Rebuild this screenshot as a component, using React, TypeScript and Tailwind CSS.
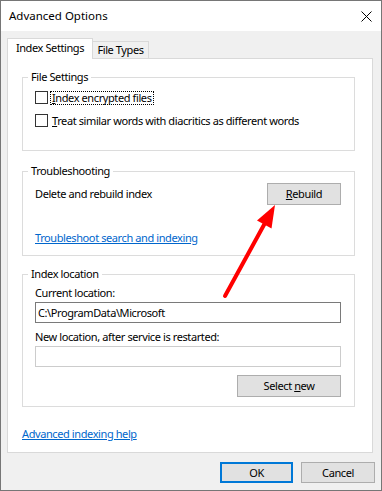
import React from "react";

function Checkbox({ children, focused }: { children: React.ReactNode; focused?: boolean }) {
	return (
		<div className="flex h-[15px] items-center">
			<span className="h-[13px] w-[13px] border border-[#333333] bg-white" />
			<span
				className={
					focused
						? "ml-[2px] flex h-[14px] items-center border border-dotted border-black px-[1px]"
						: "ml-[3px] flex h-[14px] items-center px-[1px]"
				}
			>
				{children}
			</span>
		</div>
	);
}

function Button({ children, primary, w = "w-[74px]" }: { children: React.ReactNode; primary?: boolean; w?: string }) {
	return (
		<button
			className={`${w} h-[21px] bg-[#e1e1e1] leading-[16px] ${
				primary ? "border-2 border-[#0078d7]" : "border border-[#adadad]"
			}`}
		>
			{children}
		</button>
	);
}

function Group({ label, h, children }: { label: string; h: string; children: React.ReactNode }) {
	return (
		<fieldset className={`w-[333px] ${h} border border-[#dcdcdc]`}>
			<legend className="ml-[5px] px-[3px] leading-[16px]">{label}</legend>
			<div className="pl-[12px] pr-[13px]">{children}</div>
		</fieldset>
	);
}

export default function App() {
	return (
		<div className="relative h-[491px] w-[382px] border border-[#767676] bg-[#f0f0f0] font-['Noto_Sans',sans-serif] text-[11px] leading-[16px] tracking-[-0.4px] text-black">
			<div className="flex h-[30px] items-center justify-between bg-white pl-[8px] pr-[9px]">
				<span className="text-[11.5px] tracking-normal">Advanced Options</span>
				<svg width="11" height="11" viewBox="0 0 11 11">
					<path d="M0.5 0.5L10.5 10.5M10.5 0.5L0.5 10.5" stroke="#000" strokeWidth="1" />
				</svg>
			</div>

			<div className="pl-[6px] pt-[7px]">
				{/* tabs */}
				<div className="flex h-[20px] items-end">
					<div className="relative z-10 mb-[-1px] flex h-[21px] w-[86px] items-center justify-center border border-b-0 border-[#d9d9d9] bg-white pb-[2px]">
						Index Settings
					</div>
					<div className="flex h-[17px] w-[56px] items-center justify-center border border-b-0 border-l-0 border-[#d9d9d9] bg-[#f0f0f0]">
						File Types
					</div>
				</div>

				{/* panel */}
				<div className="h-[395px] w-[366px] border border-[#d9d9d9] bg-white pl-[14px] pt-[10px]">
					<Group label="File Settings" h="h-[82px]">
						<div className="mt-[5px] flex flex-col gap-[8px]">
							<Checkbox focused>
								<span>
									<u>I</u>ndex encrypted files
								</span>
							</Checkbox>
							<Checkbox>
								<span>
									<u>T</u>reat similar words with diacritics as different words
								</span>
							</Checkbox>
						</div>
					</Group>

					<div className="mt-[12px]">
						<Group label="Troubleshooting" h="h-[93px]">
							<div className="mt-[4px] flex h-[22px] items-center justify-between">
								<span>Delete and rebuild index</span>
								<Button w="w-[74px] h-[22px]">
									<u>R</u>ebuild
								</Button>
							</div>
							<a className="mt-[25px] block w-fit text-[#0066cc] underline">
								Troubleshoot search and indexing
							</a>
						</Group>
					</div>

					<div className="mt-[10px]">
						<Group label="Index location" h="h-[141px]">
							<div className="mt-[3px]">Current location:</div>
							<div className="mt-[1px] flex h-[21px] w-[306px] items-center border border-[#7a7a7a] px-[2px]">
								C:\ProgramData\Microsoft
							</div>
							<div className="mt-[6px]">New location, after service is restarted:</div>
							<div className="mt-[1px] h-[21px] w-[306px] border border-[#cccccc]" />
							<div className="mt-[8px] flex justify-end">
								<Button w="w-[104px] h-[22px]">
									Select <u>n</u>ew
								</Button>
							</div>
						</Group>
					</div>

					<a className="mt-[19px] block w-fit text-[#0066cc] underline">Advanced indexing help</a>
				</div>

				{/* footer */}
				<div className="mt-[9px] flex justify-end gap-[8px] pr-[6px]">
					<Button primary w="w-[73px]">
						OK
					</Button>
					<Button>Cancel</Button>
				</div>
			</div>

			{/* annotation arrow */}
			<svg className="pointer-events-none absolute left-[-1px] top-[-1px]" width="382" height="491" viewBox="0 0 382 491">
				<line x1="225" y1="296" x2="265" y2="223" stroke="#ff0000" strokeWidth="4" strokeLinecap="round" />
				<polygon points="275,205 271.5,228.5 257,220.5" fill="#ff0000" />
			</svg>
		</div>
	);
}
